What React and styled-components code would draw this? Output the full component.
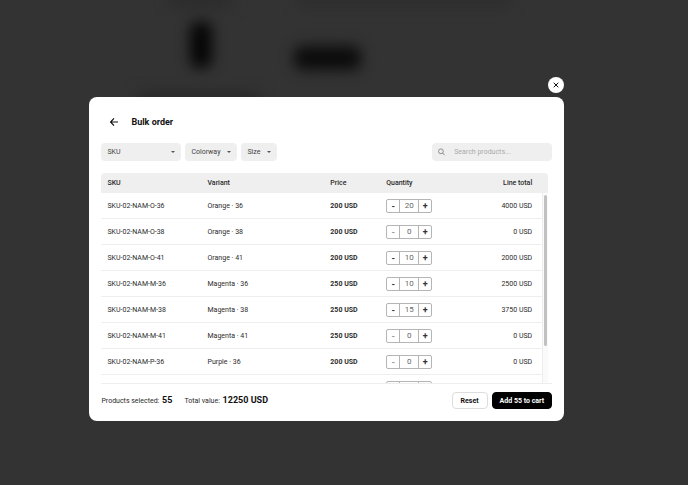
import React, { useState } from 'react';
import styled, { createGlobalStyle } from 'styled-components';

const initialItems = [
    { sku: 'SKU-02-NAM-O-36', color: 'Orange', size: 36, price: 200, qty: 20 },
    { sku: 'SKU-02-NAM-O-38', color: 'Orange', size: 38, price: 200, qty: 0 },
    { sku: 'SKU-02-NAM-O-41', color: 'Orange', size: 41, price: 200, qty: 10 },
    { sku: 'SKU-02-NAM-M-36', color: 'Magenta', size: 36, price: 250, qty: 10 },
    { sku: 'SKU-02-NAM-M-38', color: 'Magenta', size: 38, price: 250, qty: 15 },
    { sku: 'SKU-02-NAM-M-41', color: 'Magenta', size: 41, price: 250, qty: 0 },
    { sku: 'SKU-02-NAM-P-36', color: 'Purple', size: 36, price: 200, qty: 0 },
    { sku: 'SKU-02-NAM-P-38', color: 'Purple', size: 38, price: 200, qty: 0 },
];

const Filter = ({ label, width }) => (
    <FilterBox $width={width}>
        <select aria-label={label} defaultValue="">
            <option value="">{label}</option>
        </select>
        <svg width="4" height="2" viewBox="0 0 4 2" aria-hidden="true">
            <path d="M0 0h4L2 2z" fill="#555" />
        </svg>
    </FilterBox>
);

const QuantityStepper = ({ item, onChange }) => (
    <Stepper>
        <StepButton
            aria-label={`Decrease ${item.sku}`}
            disabled={item.qty === 0}
            onClick={() => onChange(item.qty - 1)}
        >
            -
        </StepButton>
        <StepInput
            aria-label={`Quantity of ${item.sku}`}
            value={item.qty}
            onChange={e => onChange(Number(e.target.value) || 0)}
        />
        <StepButton
            aria-label={`Increase ${item.sku}`}
            onClick={() => onChange(item.qty + 1)}
        >
            +
        </StepButton>
    </Stepper>
);

const App = () => {
    const [items, setItems] = useState(initialItems);
    const [search, setSearch] = useState('');

    const setQty = (sku, qty) => {
        setItems(items.map(i => (i.sku === sku ? { ...i, qty } : i)));
    };

    const handleReset = () => {
        setItems(items.map(i => ({ ...i, qty: 0 })));
    };

    const selected = items.reduce((sum, i) => sum + i.qty, 0);
    const total = items.reduce((sum, i) => sum + i.qty * i.price, 0);
    const visible = items.filter(i =>
        i.sku.toLowerCase().includes(search.toLowerCase())
    );

    return (
        <>
            <GlobalStyle />
            <Backdrop aria-hidden="true">
                <filter
                    id="soft"
                    x="-20%"
                    y="-40%"
                    width="140%"
                    height="180%"
                    colorInterpolationFilters="sRGB"
                >
                    <feGaussianBlur stdDeviation="7" />
                </filter>
                <g filter="url(#soft)">
                    <rect x="170" y="-12" width="62" height="20" fill="#2c2c2c" />
                    <rect x="298" y="-14" width="212" height="22" fill="#2e2e2e" />
                    <rect x="190" y="22" width="22" height="46" rx="8" fill="#060606" />
                    <rect x="294" y="46" width="67" height="24" rx="8" fill="#0c0c0c" />
                    <rect x="138" y="92" width="122" height="20" fill="#282828" />
                </g>
            </Backdrop>
            <Overlay>
                <CloseButton aria-label="Close">
                    <svg width="6" height="6" viewBox="0 0 6 6">
                        <path
                            d="M1 1l4 4M5 1L1 5"
                            stroke="#111"
                            strokeWidth="1"
                            strokeLinecap="round"
                        />
                    </svg>
                </CloseButton>
                <Modal role="dialog" aria-label="Bulk order">
                    <Header>
                        <BackButton aria-label="Back">
                            <svg width="8" height="8" viewBox="0 0 8 8" fill="none">
                                <path
                                    d="M8 4H.8M4 .4L.6 4L4 7.6"
                                    stroke="#111"
                                    strokeWidth="1.2"
                                />
                            </svg>
                        </BackButton>
                        <h1>Bulk order</h1>
                    </Header>
                    <Toolbar>
                        <Filter label="SKU" width={80} />
                        <Filter label="Colorway" width={52} />
                        <Filter label="Size" width={36} />
                        <SearchBox>
                            <svg width="8" height="8" viewBox="0 0 8 8" fill="none">
                                <circle cx="2.9" cy="3.3" r="2.4" stroke="#777" strokeWidth=".8" />
                                <path d="M4.6 5.1L6.7 7.2" stroke="#777" strokeWidth=".9" />
                            </svg>
                            <input
                                aria-label="Search products"
                                placeholder="Search products..."
                                value={search}
                                onChange={e => setSearch(e.target.value)}
                            />
                        </SearchBox>
                    </Toolbar>
                    <TableArea>
                        <Table>
                            <colgroup>
                                <col style={{ width: '22.4%' }} />
                                <col style={{ width: '27.5%' }} />
                                <col style={{ width: '12.5%' }} />
                                <col style={{ width: '17%' }} />
                                <col />
                                <col style={{ width: 6 }} />
                            </colgroup>
                            <thead>
                                <tr>
                                    <HeadCell>SKU</HeadCell>
                                    <HeadCell>Variant</HeadCell>
                                    <HeadCell>Price</HeadCell>
                                    <HeadCell>Quantity</HeadCell>
                                    <HeadCell $right>Line total</HeadCell>
                                    <Gutter as="th" />
                                </tr>
                            </thead>
                            <tbody>
                                {visible.map(item => (
                                    <tr key={item.sku}>
                                        <Cell>{item.sku}</Cell>
                                        <Cell>
                                            {item.color} · {item.size}
                                        </Cell>
                                        <Cell $bold>{item.price} USD</Cell>
                                        <Cell>
                                            <QuantityStepper
                                                item={item}
                                                onChange={qty => setQty(item.sku, qty)}
                                            />
                                        </Cell>
                                        <Cell $right>{item.qty * item.price} USD</Cell>
                                        <Gutter />
                                    </tr>
                                ))}
                            </tbody>
                        </Table>
                        <ScrollTrack>
                            <ScrollThumb />
                        </ScrollTrack>
                    </TableArea>
                    <Footer>
                        <Summary>
                            Products selected: <strong>{selected}</strong>
                        </Summary>
                        <Summary>
                            Total value: <strong>{total} USD</strong>
                        </Summary>
                        <Actions>
                            <ActionButton onClick={handleReset}>Reset</ActionButton>
                            <ActionButton $primary>Add {selected} to cart</ActionButton>
                        </Actions>
                    </Footer>
                </Modal>
            </Overlay>
        </>
    );
};

const GlobalStyle = createGlobalStyle`
    * {
        box-sizing: border-box;
    }
    body {
        margin: 0;
        background: #333;
        color: #2b2b2b;
        font: 7px/10px Roboto, 'Liberation Sans', sans-serif;
    }
    button, input, select {
        margin: 0;
        padding: 0;
        border: 0;
        background: none;
        color: inherit;
        font: inherit;
    }
    button {
        cursor: pointer;
    }
    svg {
        display: block;
    }
`;

const Backdrop = styled.svg`
    position: fixed;
    inset: 0;
    width: 100%;
    height: 100%;
`;

const Overlay = styled.div`
    position: relative;
    display: flex;
    flex-direction: column;
    gap: 4px;
    height: 100vh;
    padding: 77px 18% 64px 13%;
`;

const CloseButton = styled.button`
    display: flex;
    flex: none;
    align-items: center;
    justify-content: center;
    align-self: flex-end;
    width: 16px;
    height: 16px;
    border-radius: 50%;
    background: #fff;
`;

const Modal = styled.div`
    display: flex;
    flex: 1;
    flex-direction: column;
    min-height: 0;
    padding: 16px 12px 12px;
    border-radius: 8px;
    background: #fff;
`;

const Header = styled.div`
    display: flex;
    align-items: center;
    gap: 9px;
    padding-left: 5px;

    h1 {
        margin: 0;
        color: #111;
        font-size: 9px;
        font-weight: 700;
        line-height: 18px;
    }
`;

const BackButton = styled.button`
    display: flex;
    align-items: center;
    justify-content: center;
    width: 16px;
    height: 16px;
`;

const Toolbar = styled.div`
    display: flex;
    gap: 4px;
    margin: 12px 0;
`;

const FilterBox = styled.div`
    position: relative;
    width: ${p => p.$width}px;
    height: 18px;
    border-radius: 4px;
    background: #efefef;

    select {
        appearance: none;
        width: 100%;
        height: 100%;
        padding: 0 6px;
        color: #444;
    }
    svg {
        position: absolute;
        top: 8px;
        right: 6px;
        pointer-events: none;
    }
`;

const SearchBox = styled.label`
    display: flex;
    align-items: center;
    gap: 8px;
    width: 120px;
    height: 18px;
    margin-left: auto;
    padding: 0 6px;
    border-radius: 4px;
    background: #efefef;

    input {
        flex: 1;
        min-width: 0;
        outline: none;
    }
    input::placeholder {
        color: #aaa;
    }
`;

const TableArea = styled.div`
    position: relative;
    flex: 1;
    min-height: 0;
    margin-right: 4px;
    overflow: hidden;
`;

const Table = styled.table`
    width: 100%;
    table-layout: fixed;
    border-collapse: separate;
    border-spacing: 0;
`;

const HeadCell = styled.th`
    height: 20px;
    padding: 0 ${p => (p.$right ? 10 : 6)}px 0 6px;
    background: #efefef;
    font-weight: 500;
    text-align: ${p => (p.$right ? 'right' : 'left')};

    &:first-child {
        border-top-left-radius: 4px;
    }
`;

const Cell = styled.td`
    height: 26px;
    padding: 0 ${p => (p.$right ? 10 : 6)}px 0 6px;
    border-bottom: 1px solid #eee;
    font-weight: ${p => (p.$bold ? 700 : 400)};
    text-align: ${p => (p.$right ? 'right' : 'left')};
`;

const Gutter = styled.td`
    padding: 0;

    thead & {
        border-top-right-radius: 4px;
        background: #efefef;
    }
`;

const Stepper = styled.div`
    display: flex;
    width: 46px;
    height: 14px;
    border: 1px solid #b5b5b5;
    border-radius: 2px;
`;

const StepButton = styled.button`
    flex: 1;
    color: #333;
    font-size: 9px;
    font-weight: 700;

    &:disabled {
        color: #999;
    }
`;

const StepInput = styled.input`
    width: 20px;
    border: solid #b5b5b5;
    border-width: 0 1px;
    color: #666;
    font-size: 8px;
    text-align: center;
`;

const ScrollTrack = styled.div`
    position: absolute;
    top: 20px;
    right: 0;
    bottom: 0;
    width: 6px;
    padding: 2px 1px;
    border-left: 1px solid #eee;
    background: #fafafa;
`;

const ScrollThumb = styled.div`
    height: 81%;
    border-radius: 2px;
    background: #c1c1c1;
`;

const Footer = styled.div`
    display: flex;
    align-items: center;
    gap: 12px;
    padding-top: 8px;
    border-top: 1px solid #eee;
`;

const Summary = styled.span`
    white-space: nowrap;

    strong {
        margin-left: 1px;
        color: #111;
        font-size: 9px;
    }
`;

const Actions = styled.div`
    display: flex;
    gap: 4px;
    margin-left: auto;
`;

const ActionButton = styled.button`
    height: 17px;
    padding: 0 ${p => (p.$primary ? 7 : 8)}px;
    border: 1px solid ${p => (p.$primary ? '#000' : '#ddd')};
    border-radius: 4px;
    background: ${p => (p.$primary ? '#000' : '#fff')};
    color: ${p => (p.$primary ? '#fff' : '#111')};
    font-weight: 700;
`;

export default App;
